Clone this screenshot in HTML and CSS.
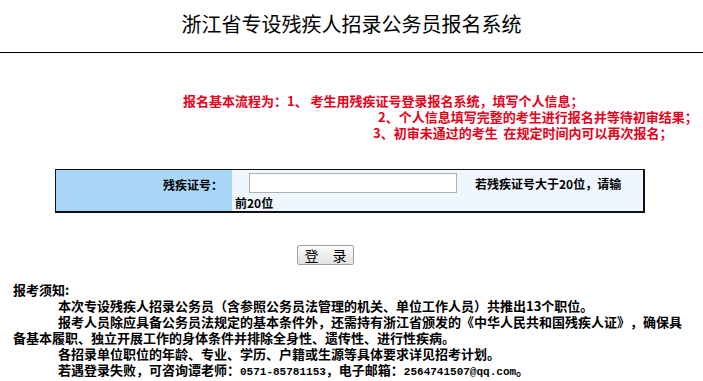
FILE: index.html
```html
<!DOCTYPE html>
<html lang="zh-CN">
<head>
  <meta charset="UTF-8">
  <title>浙江省专设残疾人招录公务员报名系统</title>
  <link rel="stylesheet" href="styles.css">
</head>
<body>

<div class="header">
  <h1 class="title">浙江省专设残疾人招录公务员报名系统</h1>
</div>
<div class="rule"></div>

<div class="flow">
  <p class="flow-line line-1">报名基本流程为：1、&nbsp;考生用残疾证号登录报名系统，填写个人信息；</p>
  <p class="flow-line line-2">2、个人信息填写完整的考生进行报名并等待初审结果；</p>
  <p class="flow-line line-3">3、初审未通过的考生&nbsp;&nbsp;在规定时间内可以再次报名；</p>
</div>

<div class="login-box">
  <div class="login-label">残疾证号：</div>
  <div class="login-field">
    <div class="field-row">
      <input type="text" id="cardNo" class="card-input">
      <span class="hint">若残疾证号大于20位，请输</span>
    </div>
    <div class="hint-more">前20位</div>
  </div>
</div>

<div class="actions">
  <button class="login-btn" onclick="doLogin()">登　录</button>
</div>

<div class="notice">
  <p class="notice-title">报考须知:</p>
  <p class="notice-item">本次专设残疾人招录公务员（含参照公务员法管理的机关、单位工作人员）共推出13个职位。</p>
  <p class="notice-item">报考人员除应具备公务员法规定的基本条件外，还需持有浙江省颁发的《中华人民共和国残疾人证》，确保具备基本履职、独立开展工作的身体条件并排除全身性、遗传性、进行性疾病。</p>
  <p class="notice-item">各招录单位职位的年龄、专业、学历、户籍或生源等具体要求详见招考计划。</p>
  <p class="notice-item">若遇登录失败，可咨询谭老师：<span class="mono">0571-85781153</span>，电子邮箱：<span class="mono">2564741507@qq.com</span>。</p>
</div>

<script>
  function doLogin() {
    const no = document.getElementById("cardNo").value.trim();
    if (!no) {
      alert("请输入残疾证号！");
      return;
    }
  }
</script>

</body>
</html>
```

FILE: styles.css
```css
body {
  margin: 0;
  font-family: "Noto Sans CJK SC", "Liberation Sans", sans-serif;
  background: #fff;
  color: #000;
  text-spacing-trim: space-all;
}
p {
  margin: 0;
}
.header {
  height: 52px;
  padding-top: 14px;
  box-sizing: border-box;
}
.title {
  margin: 0;
  text-align: center;
  font-size: 20px;
  line-height: 20px;
  font-weight: normal;
}
.rule {
  border-top: 1px solid #000;
}
.flow {
  margin-top: 40px;
  color: #e8001a;
  font-size: 13px;
  font-weight: bold;
  line-height: 16px;
}
.line-1 {
  padding-left: 183px;
}
.line-2 {
  padding-left: 378px;
}
.line-3 {
  padding-left: 373px;
}
.login-box {
  display: flex;
  width: 590px;
  margin: 28px 0 0 55px;
  box-sizing: border-box;
  border: 1px solid #111;
  border-width: 1px 2px 2px 1px;
  font-size: 12px;
  font-weight: bold;
}
.login-label {
  width: 176px;
  background: #a8d6f6;
  text-align: right;
  padding: 5px 9px 0 0;
  box-sizing: border-box;
  line-height: 20px;
}
.login-field {
  flex: 1;
  background: #eff6fe;
  padding: 3px 0 0 3px;
}
.field-row {
  display: flex;
  align-items: center;
  height: 20px;
}
.card-input {
  width: 208px;
  height: 20px;
  margin: 0 18px 0 14px;
  box-sizing: border-box;
  border: 1px solid #a9b0b6;
  background: #fff;
}
.hint-more {
  margin-top: 2px;
  line-height: 16px;
}
.actions {
  margin-top: 29px;
  padding-left: 297px;
}
.login-btn {
  width: 57px;
  height: 20px;
  padding: 0;
  font-family: "Noto Sans CJK SC", sans-serif;
  font-size: 14px;
  line-height: 18px;
  color: #000;
  background: linear-gradient(#fbfbfb, #e2e2e2);
  border: 1px solid #a0a0a0;
  border-radius: 2px;
}
.notice {
  width: 676px;
  margin-top: 16px;
  padding-left: 13px;
  font-size: 13px;
  font-weight: bold;
  line-height: 16px;
}
.notice-item {
  text-indent: 45px;
}
.mono {
  font-family: "Liberation Mono", monospace;
  font-size: 11px;
}
```
